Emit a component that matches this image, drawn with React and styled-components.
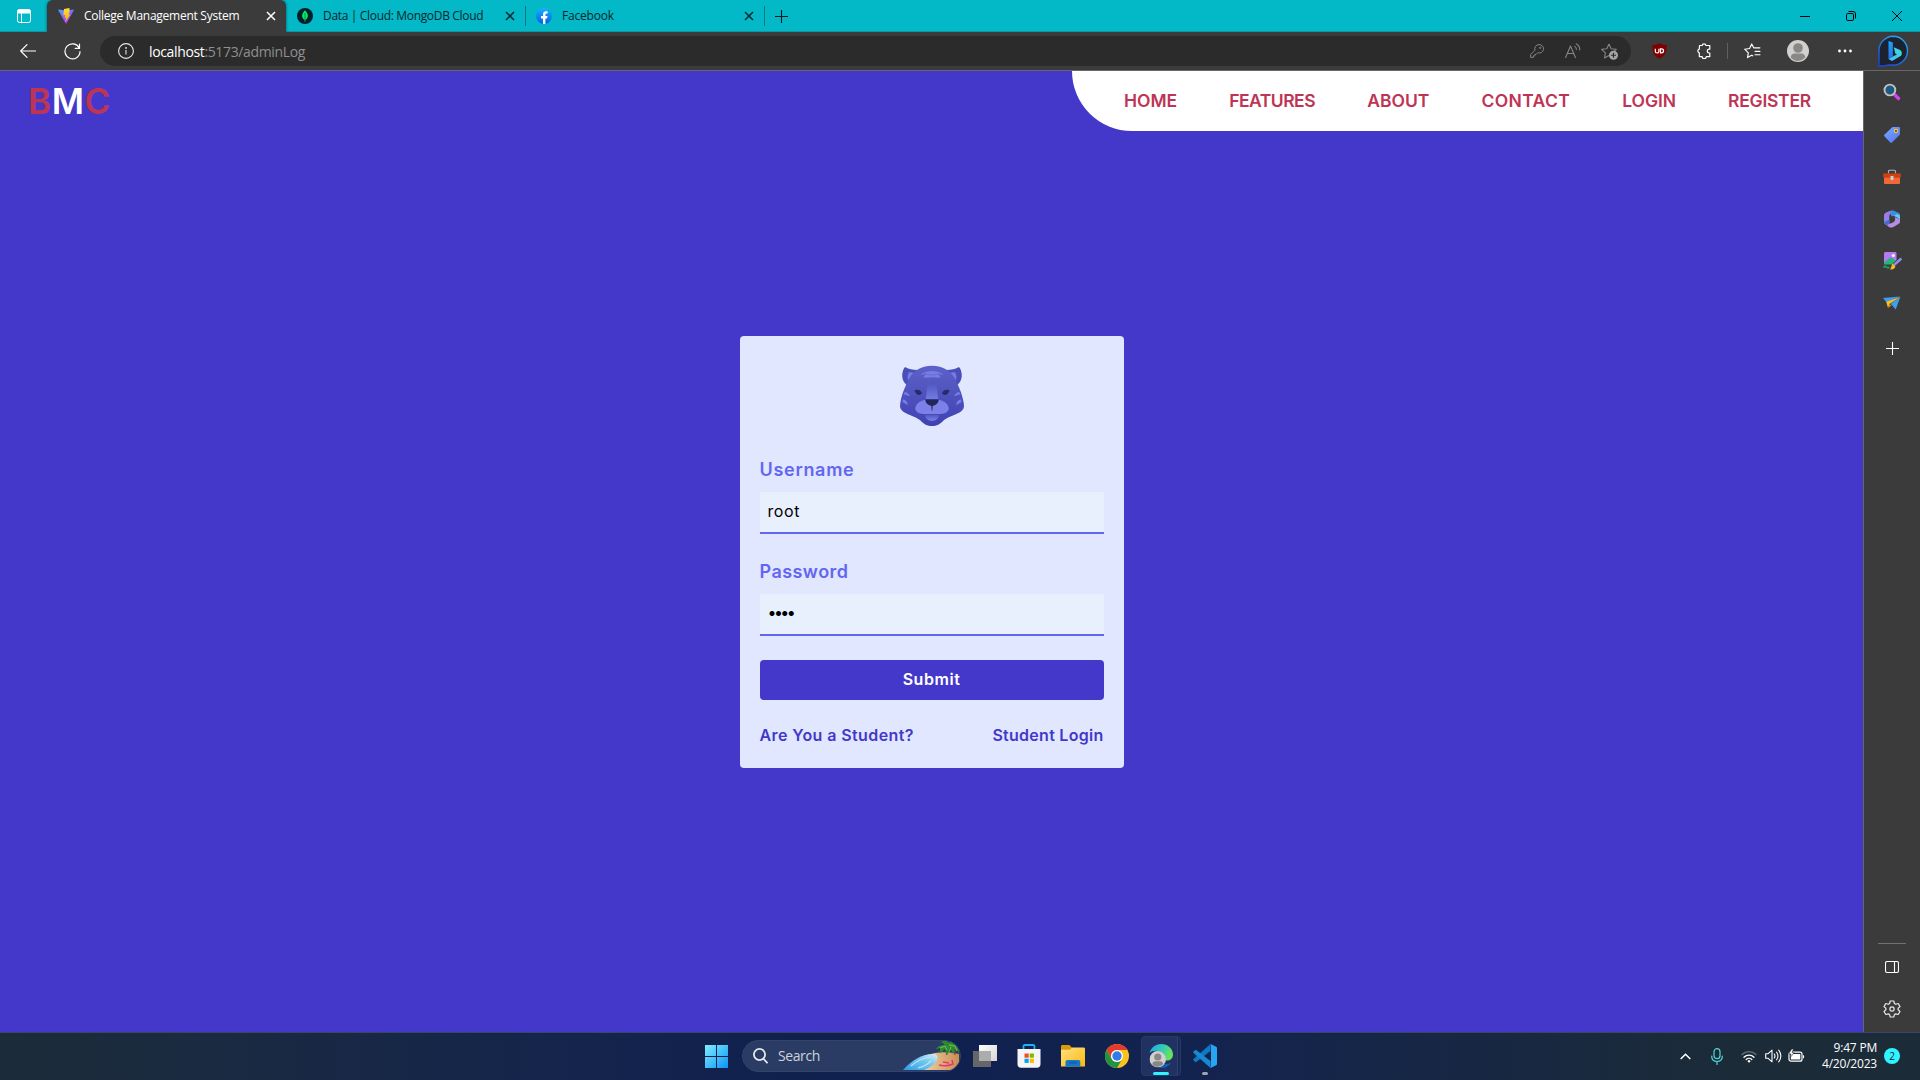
import React from "react";
import styled, { createGlobalStyle } from "styled-components";

const UI = `"Open Sans", "Noto Sans", sans-serif`;
const BRAND = `Inter, "Open Sans", sans-serif`;

const GlobalStyle = createGlobalStyle`
  *, *::before, *::after { box-sizing: border-box; }
  body { margin: 0; background: #4338ca; overflow: hidden; }
  svg { display: block; flex: none; }
  button, input { font: inherit; margin: 0; border: 0; padding: 0; }
`;

const Desktop = styled.div`
  width: 1920px;
  height: 1080px;
  display: flex;
  flex-direction: column;
  overflow: hidden;
  font-family: ${UI};
`;

/* ---------- browser chrome ---------- */

const TabStrip = styled.header`
  height: 32px;
  display: flex;
  background: #03b8c7;
  box-shadow: inset 0 -1px 0 #0b98a5;
`;

const TabActions = styled.div`
  width: 47px;
  padding-left: 17px;
  display: flex;
  align-items: center;
`;

const TabItem = styled.div`
  width: 239px;
  height: 32px;
  padding: 0 10px 0 11px;
  display: flex;
  align-items: center;
  gap: 10px;
  color: ${(p) => (p.$active ? "#ffffff" : "#06272b")};
  background: ${(p) => (p.$active ? "#3b3b3b" : "transparent")};
  border-radius: ${(p) => (p.$active ? "6px 6px 0 0" : "0")};
  box-shadow: ${(p) => (p.$active ? "0 0 3px rgba(0,40,50,.7)" : "none")};
  clip-path: ${(p) => (p.$active ? "inset(0 -4px 0 -4px)" : "none")};
`;

const TabLabel = styled.span`
  flex: 1;
  font-size: 12px;
  line-height: 16px;
  white-space: nowrap;
  letter-spacing: ${(p) => p.$ls || "0"};
`;

const TabDivider = styled.div`
  width: 1px;
  height: 20px;
  margin: 6px -1px 0 0;
  background: #13737c;
`;

const NewTab = styled.div`
  padding-left: 11px;
  display: flex;
  align-items: center;
`;

const WindowControls = styled.div`
  margin-left: auto;
  display: flex;
`;

const WindowControl = styled.div`
  width: 46px;
  display: flex;
  align-items: center;
  justify-content: center;
`;

const Toolbar = styled.div`
  height: 39px;
  padding: 4px 0;
  display: flex;
  align-items: center;
  background: #3b3b3b;
  border-bottom: 1px solid #676767;
`;

const Slot = styled.div`
  width: ${(p) => p.$w}px;
  flex: none;
  display: flex;
  align-items: center;
  justify-content: center;
`;

const AddressBar = styled.div`
  width: 1531px;
  height: 30px;
  margin-left: 12px;
  border-radius: 15px;
  padding: 0 13px 0 18px;
  background: #2b2b2b;
  display: flex;
  align-items: center;
`;

const Url = styled.span`
  flex: 1;
  padding: 1px 0 0 15px;
  font-size: 14px;
  line-height: 20px;
  letter-spacing: -0.36px;
  color: #8f8f8f;
  b { font-weight: 400; color: #fff; }
`;

const AddressIcons = styled.div`
  display: flex;
  align-items: center;
  gap: 20.5px;
`;

const ToolDivider = styled.div`
  width: 1px;
  height: 16px;
  background: #606060;
`;

const Main = styled.div`
  flex: 1;
  display: flex;
  min-height: 0;
`;

const SideBar = styled.aside`
  width: 57px;
  border-left: 1px solid #676767;
  background: #3b3b3b;
  display: flex;
  flex-direction: column;
  align-items: center;
  padding-bottom: 2px;
`;

const SideItem = styled.div`
  height: 42px;
  display: flex;
  align-items: center;
  margin-top: ${(p) => p.$mt || 0}px;
`;

const SideRule = styled.div`
  width: 28px;
  height: 1px;
  margin: auto 0 2px;
  background: #707070;
`;

/* ---------- web page ---------- */

const Page = styled.main`
  flex: 1;
  display: flex;
  flex-direction: column;
  background: #4338ca;
  font-family: ${BRAND};
`;

const PageHeader = styled.div`
  height: 60px;
  display: flex;
  justify-content: space-between;
`;

const Logo = styled.div`
  padding-left: 28px;
  font-size: 35px;
  line-height: 60px;
  font-weight: 600;
  letter-spacing: 0.6px;
  color: #be3455;
  span { color: #fff; }
`;

const Nav = styled.nav`
  width: 791px;
  padding: 0 52px 0 52px;
  border-bottom-left-radius: 60px;
  background: #fff;
  display: flex;
  justify-content: space-between;
`;

const NavLink = styled.a`
  font-size: 17.5px;
  line-height: 60px;
  font-weight: 600;
  color: #be3455;
  letter-spacing: ${(p) => p.$ls};
`;

const Center = styled.div`
  flex: 1;
  display: flex;
  flex-direction: column;
  align-items: center;
  padding: 205px 0 0 0;
`;

const Card = styled.form`
  width: 384px;
  height: 432px;
  padding: 29px 20px 0;
  border-radius: 4px;
  background: #e0e7ff;
  display: flex;
  flex-direction: column;
  align-items: stretch;
`;

const Mascot = styled.div`
  display: flex;
  justify-content: center;
  height: 91px;
`;

const Field = styled.label`
  height: 102px;
  display: flex;
  flex-direction: column;
`;

const FieldName = styled.span`
  height: 36px;
  font-size: 18px;
  line-height: 27px;
  font-weight: 600;
  letter-spacing: ${(p) => p.$ls};
  color: #6366f1;
`;

const Input = styled.input`
  && {
    width: 344px;
    height: 42px;
    padding: 0 8px ${(p) => p.$lift || 2}px;
    border-bottom: 2px solid #6366f1;
    outline: none;
    border-radius: 0;
    background: #e8f0fe;
    color: #000;
    font-family: ${BRAND};
    font-size: 16px;
    letter-spacing: ${(p) => p.$ls};
  }
`;

const Submit = styled.button`
  && {
    height: 40px;
    padding-bottom: 2px;
    border-radius: 4px;
    background: #4338ca;
    color: #fff;
    font-size: 16px;
    font-weight: 600;
    letter-spacing: 0.55px;
  }
`;

const CardLinks = styled.div`
  padding-top: 23px;
  display: flex;
  justify-content: space-between;
`;

const CardLink = styled.a`
  font-size: 16px;
  line-height: 24px;
  font-weight: 600;
  letter-spacing: ${(p) => p.$ls};
  color: #4338ca;
`;

/* ---------- taskbar ---------- */

const Taskbar = styled.footer`
  height: 48px;
  padding-bottom: 1px;
  border-top: 1px solid #3a4568;
  background: linear-gradient(90deg, #1c2b38 0%, #1a2a40 10%, #14244c 30%, #10204f 45%, #13234f 62%, #182840 80%, #1c2b38 90%);
  display: flex;
  align-items: center;
`;

const TaskApps = styled.div`
  padding-left: 705px;
  display: flex;
  align-items: center;
`;

const SearchPill = styled.div`
  width: 219px;
  height: 32px;
  flex: none;
  margin: 0 12px 0 14px;
  padding-left: 10px;
  border-radius: 16px;
  overflow: hidden;
  background: #2b3c64;
  border: 1px solid #33446b;
  display: flex;
  align-items: center;
`;

const SearchText = styled.span`
  flex: 1;
  padding: 0 0 1px 10px;
  font-size: 14px;
  letter-spacing: -0.4px;
  color: #cdd2dd;
`;

const TaskIcon = styled.div`
  width: 44px;
  height: 46px;
  display: flex;
  align-items: center;
  justify-content: center;
  flex: none;
`;

const ActiveGroup = styled.div`
  width: 40px;
  height: 40px;
  margin: 0 2px;
  border-radius: 4px;
  flex: none;
  background: linear-gradient(90deg, #213161 35px, #2f3f6c 35px, #2f3f6c 36px, #1a2a58 36px);
  border: 1px solid #293967;
  display: flex;
  flex-direction: column;
  align-items: center;
  padding-top: 7px;
`;

const RunningApp = styled.div`
  width: 44px;
  height: 40px;
  flex: none;
  display: flex;
  flex-direction: column;
  align-items: center;
  padding-top: 8px;
`;

const Indicator = styled.div`
  width: ${(p) => p.$w}px;
  height: 3px;
  margin-top: 4px;
  border-radius: 2px;
  background: ${(p) => p.$c};
`;

const Tray = styled.div`
  margin-left: auto;
  padding-right: 20px;
  display: flex;
  align-items: center;
`;

const TrayItem = styled.div`
  margin-right: ${(p) => p.$gap}px;
`;

const Clock = styled.div`
  font-size: 12px;
  line-height: 16px;
  text-align: right;
  color: #fff;
  letter-spacing: -0.2px;
`;

const Badge = styled.div`
  width: 16px;
  height: 16px;
  margin-left: 7px;
  border-radius: 50%;
  background: #2ff3ff;
  color: #12272f;
  font-size: 10px;
  line-height: 16px;
  text-align: center;
`;

/* ---------- icons ---------- */

const CloseTab = ({ color }) => (
  <svg width="10" height="10" viewBox="0 0 10 10" stroke={color} strokeWidth="1.5">
    <path d="M1 1l8 8M9 1l-8 8" />
  </svg>
);

const TabMenuIcon = () => (
  <svg width="14" height="14" viewBox="0 0 14 14" fill="none" stroke="#fff" strokeWidth="1">
    <rect x=".5" y=".5" width="13" height="13" rx="2" />
    <path d="M1 1h12v3H1z" fill="#fff" />
    <path d="M4.5 4v9.5" />
  </svg>
);

const ViteIcon = () => (
  <svg width="16" height="16" viewBox="0 0 16 16">
    <defs>
      <linearGradient id="vg" x1="0" y1="0" x2=".6" y2="1"><stop stopColor="#41a6ff" /><stop offset="1" stopColor="#bd34fe" /></linearGradient>
      <linearGradient id="vy" x1="0" y1="0" x2="0" y2="1"><stop stopColor="#ffdd35" /><stop offset="1" stopColor="#ffa800" /></linearGradient>
    </defs>
    <path d="M.3 2.3l7.3 13c.2.4.7.4.9 0l7.3-13c.2-.4-.1-.8-.5-.7L8.100 2.800.8 1.600c-.4-.1-.7.3-.5.7z" fill="url(#vg)" />
    <path d="M11.500.1L6 1.100l-.7 6.200 2-.4-.6 3.200 1.500-.3-.8 4.400 4.900-7.700-1.800.3 1-2.900z" fill="url(#vy)" />
  </svg>
);

const MongoIcon = () => (
  <svg width="16" height="16" viewBox="0 0 16 16">
    <circle cx="8" cy="8" r="8" fill="#001e2b" />
    <path d="M8 2.300c1.600 1.900 2.900 3.300 2.900 5.500 0 1.900-1.200 3.300-2.500 4.200L8.200 14h-.4l-.2-2C6.300 11.100 5.100 9.700 5.100 7.800 5.100 5.600 6.400 4.200 8 2.300z" fill="#00ed64" />
    <path d="M8 5v7.500" stroke="#00684a" strokeWidth=".7" />
  </svg>
);

const FacebookIcon = () => (
  <svg width="16" height="16" viewBox="0 0 16 16">
    <defs><linearGradient id="fb" x1="0" y1="0" x2="0" y2="1"><stop stopColor="#19afff" /><stop offset="1" stopColor="#0062e0" /></linearGradient></defs>
    <circle cx="8" cy="8" r="8" fill="url(#fb)" />
    <path d="M7 16v-5.600H5V8.100h2V6.400c0-2 1.200-3.100 3-3.100.8 0 1.600.1 1.600.1v2h-1c-.9 0-1.200.6-1.200 1.200v1.500h2.100l-.4 2.300H9.400V16z" fill="#fff" />
  </svg>
);

const PlusIcon = ({ size, color }) => (
  <svg width={size} height={size} viewBox="0 0 13 13" stroke={color} strokeWidth="1.100">
    <path d="M6.500 0v13M0 6.500h13" />
  </svg>
);

const BackIcon = () => (
  <svg width="16" height="14" viewBox="0 0 16 14" fill="none" stroke="#fff" strokeWidth="1.200" strokeLinecap="round" strokeLinejoin="round">
    <path d="M15.500 7H.7M7 .7L.7 7 7 13.300" />
  </svg>
);

const ReloadIcon = () => (
  <svg width="17" height="17" viewBox="0 0 17 17" fill="none" stroke="#fff" strokeWidth="1.200" strokeLinecap="round" strokeLinejoin="round">
    <path d="M15.300 5.200A7.500 7.500 0 1 0 16 8.500M15.500 1.200v4.200h-4.300" />
  </svg>
);

const InfoIcon = () => (
  <svg width="16" height="16" viewBox="0 0 16 16" fill="none" stroke="#e8e8e8" strokeWidth="1.100">
    <circle cx="8" cy="8" r="7.400" />
    <path d="M8 7v4.500" />
    <circle cx="8" cy="4.900" r=".4" />
  </svg>
);

const KeyIcon = () => (
  <svg width="14" height="14" viewBox="0 0 14 14" fill="none" stroke="#858585" strokeWidth="1" strokeLinejoin="round">
    <path d="M9 .6a4.200 4.200 0 0 0-4 5.600L.6 10.600v2.800h2.700v-1.500h1.500v-1.500h1.300L7.800 8.700A4.200 4.200 0 1 0 9 .6z" />
    <circle cx="10.200" cy="3.800" r=".7" />
  </svg>
);

const ReadIcon = () => (
  <svg width="16" height="16" viewBox="0 0 16 16" fill="none" stroke="#858585" strokeWidth="1.100" strokeLinecap="round" strokeLinejoin="round">
    <path d="M.6 14.500L5.500 3l4.900 11.500M2.200 10.500h6.600M9.700 3.400c1.100.7 1.700 1.700 1.700 3M11.200.8c2.400 1.300 3.700 3.400 3.500 6.200" />
  </svg>
);

const StarAddIcon = () => (
  <svg width="17" height="17" viewBox="0 0 17 17" fill="none" stroke="#858585" strokeLinejoin="round">
    <path d="M8 1l2.100 4.700 5.200.6-3.900 3.400M8 12.600L3.500 15l.9-5.200L.6 6.300l5.200-.6L8 1" strokeWidth="1.100" />
    <circle cx="12.500" cy="12.300" r="4.500" fill="#a5a5a5" stroke="none" />
    <path d="M12.500 9.800v5M10 12.300h5" stroke="#2b2b2b" strokeWidth="1.100" />
  </svg>
);

const ShieldIcon = () => (
  <svg width="15" height="16" viewBox="0 0 15 16">
    <path d="M7.500 0C5.300 1.400 3 2 .3 2.100c0 6.500 1 10.600 7.200 13.700 6.200-3.100 7.200-7.200 7.200-13.700C12 2 9.700 1.400 7.500 0z" fill="#800000" />
    <path d="M3.300 5.700v2.500c0 2.400 3.600 2.400 3.600 0V5.700M6.900 7.400h.6M8.500 5.800h1a2 2 0 0 1 0 4.100h-1z" fill="none" stroke="#fff" strokeWidth="1.200" />
  </svg>
);

const PuzzleIcon = () => (
  <svg width="16" height="16" viewBox="0 0 16 16" fill="none" stroke="#fff" strokeWidth="1.200" strokeLinejoin="round">
    <path d="M3.500 2.500h2.600a2 2 0 0 1 3.900 0h3.800v3.700h-.6a1.900 1.900 0 0 0 0 3.800h.6v3.600h-3.500a2.100 2.100 0 0 1-4.200 0H3.300V9.900a1.900 1.900 0 0 1 0-3.700z" />
  </svg>
);

const FavListIcon = () => (
  <svg width="17" height="16" viewBox="0 0 17 16" fill="none" stroke="#fff" strokeWidth="1.150" strokeLinejoin="round" strokeLinecap="round">
    <path d="M9.800 4.800H15.900M11 8.300h5M11 11.700h5M8.700 12.800l-1-.5-4.200 2.300.8-4.800L.7 6.200l4.900-.7L7.700.9l2 3.900" />
  </svg>
);

const Avatar = ({ size }) => (
  <svg width={size} height={size} viewBox="0 0 22 22">
    <circle cx="11" cy="11" r="11" fill="#d2d0ce" />
    <circle cx="11" cy="8" r="4.800" fill="#8a8886" />
    <path d="M3.800 17.500c0-2.400 1.600-4 4-4h6.400c2.400 0 4 1.600 4 4A10.500 10.500 0 0 1 11 21c-3 0-5.500-1.200-7.200-3.500z" fill="#8a8886" />
  </svg>
);

const DotsIcon = () => (
  <svg width="14" height="4" viewBox="0 0 14 4" fill="#fff">
    <circle cx="1.500" cy="2" r="1.400" /><circle cx="7" cy="2" r="1.400" /><circle cx="12.500" cy="2" r="1.400" />
  </svg>
);

const BingIcon = () => (
  <svg width="32" height="32" viewBox="0 0 32 32">
    <defs>
      <linearGradient id="bo" x1=".8" y1="0" x2=".2" y2="1"><stop stopColor="#2ba8f0" /><stop offset="1" stopColor="#1c46d8" /></linearGradient>
      <linearGradient id="bb" x1="0" y1="0" x2="0" y2="1"><stop stopColor="#18a8f5" /><stop offset="1" stopColor="#2a6df0" /></linearGradient>
      <linearGradient id="bc" x1="1" y1="0" x2="0" y2="1"><stop stopColor="#35e3cf" /><stop offset="1" stopColor="#4bb4ff" /></linearGradient>
    </defs>
    <path d="M16 1.200a14.500 14.500 0 1 1 0 29c-3 0-5-.7-6.500.2-2 .8-5 .6-8 .4 1-2 .6-4 .5-6.500V15.500A14.500 14.500 0 0 1 16 1.200z" fill="#1d2230" stroke="url(#bo)" strokeWidth="1.400" />
    <path d="M11.500 6l4.300 1.600V21l-4.300 3.200z" fill="url(#bb)" />
    <path d="M16.800 12.300l6.200 2.800c1.400.7 1.800 2 1.800 3.300 0 1.500-.8 2.500-2 3.200L15 26l-3.500-1.900 4.300-2.700 4.200-2-1.700-1z" fill="url(#bc)" />
  </svg>
);

const SideSearch = () => (
  <svg width="18" height="18" viewBox="0 0 18 18">
    <path d="M11.500 11.500l4 4" stroke="#d940f5" strokeWidth="3.200" strokeLinecap="round" />
    <circle cx="6.900" cy="7" r="5.400" fill="#1d5a7c" stroke="#bfc3c4" strokeWidth="1.900" />
  </svg>
);

const SideTag = () => (
  <svg width="18" height="18" viewBox="0 0 18 18">
    <defs><linearGradient id="tg" x1="0" y1="0" x2="1" y2="1"><stop stopColor="#73b0ff" /><stop offset="1" stopColor="#5b6cf5" /></linearGradient></defs>
    <path d="M9.500 1h6c1 0 1.500.5 1.500 1.500v6L9 16.500c-.6.500-1.100.5-1.700 0L1.400 10.300c-.5-.6-.5-1 0-1.600z" fill="url(#tg)" />
    <circle cx="13" cy="5" r="1.700" fill="#4a5078" stroke="#f5c518" strokeWidth="1.200" />
  </svg>
);

const SideTools = () => (
  <svg width="18" height="18" viewBox="0 0 18 18">
    <path d="M5.500 5.500V3.300c0-.8.4-1.100 1.100-1.100h4.800c.7 0 1.100.3 1.100 1.100v2.200" fill="none" stroke="#aeb0b1" strokeWidth="1.100" />
    <path d="M1 9h16v6c0 .7-.3 1-1 1H2c-.7 0-1-.3-1-1z" fill="#f0683a" />
    <path d="M.2 5.500h17.600v3c0 .7-.3 1.200-1 1.200H1.200c-.7 0-1-.5-1-1.200z" fill="#d0400f" />
    <path d="M7.500 8h3v2.800a1.500 1.500 0 0 1-3 0z" fill="#c8cdd0" />
  </svg>
);

const SideOffice = () => (
  <svg width="18" height="18" viewBox="0 0 18 18">
    <path d="M7.200.8C4 2 1.400 3.200 1 4.800v7.500c0 1.300 1 2 2.200 2.300 2.200.5 3.100-.6 3.100-2V6.200C6.300 3.800 9 3 10.500 1.500 9.500.600 8.200.500 7.200.800z" fill="#9a7bea" />
    <path d="M8.300.7c-1 .6-1.300 1.500-1 3l1.200 2.600 2.800-.4L17 8.400V5c0-1-.5-1.500-1.300-2L10.300.6c-.7-.3-1.400-.3-2 .1z" fill="#3e8fe0" />
    <path d="M11 5.800l6 3.400V5.500L14 4z" fill="#55d0f5" />
    <path d="M1.200 13.300L6 16.900c1.700 1 3 .8 4.500 0l5-3c1-.6 1.500-1.400 1.500-2.500V9.200l-5.500-2.100c1.300 2.200.8 4.200-1.500 5.400-2.700 1.500-5.500 2-8.800.8z" fill="#b68be6" />
    <path d="M1 12l5-2 .6 3.200L4.200 15.500 1.500 13.800z" fill="#426fcb" />
  </svg>
);

const SideImage = () => (
  <svg width="19" height="18" viewBox="0 0 19 18">
    <path d="M2.500 0h9.500c1 0 1.500.5 1.500 1.500V12H1V1.500C1 .5 1.500 0 2.500 0z" fill="#b57af2" />
    <path d="M1 10.500l6-4.800c.6-.4 1-.4 1.600 0L13.500 9l-3 3.500H1z" fill="#27b573" />
    <path d="M.3 15.500c1.500-1.600 3-1 3.200-.5s1.700 1 3 .2" fill="none" stroke="#1f9f6d" strokeWidth="1.800" />
    <circle cx="10.300" cy="3.400" r="1.500" fill="#fff" />
    <path d="M11.500 12.500l6-5.300" stroke="#3b3b3b" strokeWidth="4" strokeLinecap="round" />
    <path d="M11.500 12.500l6-5.300" stroke="#8f8bf0" strokeWidth="2.600" strokeLinecap="round" />
    <path d="M9.500 11.500l3 3c-1 2.500-3 3.300-5.500 2.700 1.500-1 1-3.500 2.500-5.700z" fill="#fbb91a" />
  </svg>
);

const SidePlane = () => (
  <svg width="18" height="18" viewBox="0 0 18 18">
    <path d="M0 4L17.300 2.500 3.500 8.300z" fill="#3f9df2" />
    <path d="M17.300 3L7.800 9.800l4.900 5.700z" fill="#3ca0f5" />
    <path d="M3.200 7.800L17.300 3 6.500 10.100 5 14z" fill="#f9c31d" />
    <path d="M5 14l1.500-3.900 2 1.500z" fill="#d88a10" />
  </svg>
);

const PanelIcon = () => (
  <svg width="14" height="12" viewBox="0 0 14 12" fill="none" stroke="#fff" strokeWidth="1.100">
    <rect x=".5" y=".5" width="13" height="11" rx="1.800" /><path d="M9.500.5v11" />
  </svg>
);

const GearIcon = () => (
  <svg width="18" height="18" viewBox="0 0 18 18" fill="none" stroke="#e8e8e8" strokeWidth="1.200" strokeLinejoin="round">
    <path d="M7.200 1h3.600l.6 2.500 1.300.8 2.500-.8L17 6.600 15.100 8.300v1.500l1.900 1.700-1.800 3-2.500-.7-1.300.8-.6 2.400H7.200l-.6-2.400-1.300-.8-2.500.7-1.800-3 1.900-1.700V8.300L1 6.600l1.800-3.100 2.500.8 1.300-.8z" />
    <circle cx="9" cy="9" r="2.100" />
  </svg>
);

const PantherIcon = () => (
  <svg width="64" height="62" viewBox="60 45 192 186">
    <defs>
      <linearGradient id="pf" x1="0" y1="0" x2="0" y2="1"><stop stopColor="#5c62c8" /><stop offset="1" stopColor="#3f41b2" /></linearGradient>
      <linearGradient id="pn" x1="0" y1="0" x2="0" y2="1"><stop stopColor="#5056bf" /><stop offset="1" stopColor="#757be6" /></linearGradient>
      <linearGradient id="pc" x1="0" y1="0" x2="0" y2="1"><stop stopColor="#5157c2" /><stop offset="1" stopColor="#7a80e9" /></linearGradient>
    </defs>
    <path d="M112 60C98 60 86 58 77 52q-3-1-5 3c-9 17-7 38 8 50zM200 60c14 0 26-2 35-8q3-1 5 3c9 17 7 38-8 50z" fill="#494eb8" />
    <path d="M104 69c-7-1-12-3-17-2-6 8-5 20-1 29zM208 69c7-1 12-3 17-2 6 8 5 20 1 29z" fill="#767ce5" />
    <path d="M156 47c-34 0-58 16-70 41-9 20-20 40-25 70-2 14-1 20 9 27 12 8 38 15 50 25 9 10 18 18 36 18s27-8 36-18c12-10 38-17 50-25 10-7 11-13 9-27-5-30-16-50-25-70-12-25-36-41-70-41z" fill="url(#pf)" />
    <path d="M122 74c8-7 18-11 34-11s26 4 34 11l-17-2q9 6 7 10c-5 2-12 0-24 0s-19 2-24 0q-2-4 7-10z" fill="#777de4" />
    <path d="M131 70q10 5 25 5t25-5" fill="none" stroke="#5e64cc" strokeWidth="2" />
    <path d="M143 101q13-7 26 0l6 48h-38z" fill="url(#pn)" />
    <path d="M103 121c10-4 20-1 23 9-5 8-17 6-20-4zM209 121c-10-4-20-1-23 9 5 8 17 6 20-4z" fill="#282b65" />
    <path d="M138 149c-16 2-32 12-32 26 0 12 12 17 24 17h52c12 0 24-5 24-17 0-14-16-24-32-26z" fill="#7b81e9" />
    <path d="M135 194h42c-1 24-41 24-42 0z" fill="url(#pc)" />
    <path d="M136 148h40c1 10-8 18-18 20l-1 14h-2l-1-14c-10-2-19-10-18-20z" fill="#23265a" />
    <path d="M74 126q13 2 16 13-9-3-19-6zM69 148q13 3 15 17-10-4-17-10zM238 126q-13 2-16 13 9-3 19-6zM243 148q-13 3-15 17 10-4 17-10z" fill="#777de4" />
  </svg>
);

const WindowsIcon = () => (
  <svg width="23" height="23" viewBox="0 0 23 23">
    <defs><linearGradient id="wi" gradientUnits="userSpaceOnUse" x1="0" y1="0" x2="23" y2="23"><stop stopColor="#7fedff" /><stop offset="1" stopColor="#0a94f5" /></linearGradient></defs>
    <path d="M0 0h11v11H0zM12 0h11v11H12zM0 12h11v11H0zM12 12h11v11H12z" fill="url(#wi)" />
  </svg>
);

const SearchIcon = () => (
  <svg width="15" height="16" viewBox="0 0 15 16" fill="none" stroke="#e3e6ec" strokeWidth="1.800" strokeLinecap="round">
    <circle cx="6.500" cy="6.500" r="5.600" /><path d="M10.700 11l3.300 3.700" />
  </svg>
);

const BeachIcon = () => (
  <svg width="58" height="30" viewBox="0 0 58 30">
    <defs>
      <linearGradient id="sea" x1="0" y1="1" x2="1" y2="0"><stop stopColor="#2b9be6" /><stop offset=".6" stopColor="#76c8ee" /><stop offset="1" stopColor="#d6eff2" /></linearGradient>
      <linearGradient id="snd" x1="0" y1="0" x2="1" y2="0"><stop stopColor="#f6d7ae" /><stop offset="1" stopColor="#c98d55" /></linearGradient>
    </defs>
    <path d="M26 14c6-3 20-4 31-1v16H18z" fill="url(#snd)" />
    <path d="M1 29C9 20 19 13 31 13c6 0 6 6 1 10-4 3-5 4-10 6z" fill="url(#sea)" />
    <path d="M9 25q9-8 20-9M16 27q8-2 13-7" stroke="#b9e6f6" strokeWidth="1.200" fill="none" />
    <path d="M37 24q7 2 14-1l-1-4M41 21l6 1" stroke="#e8376a" strokeWidth="1.500" fill="none" />
    <path d="M45 14c-1-4-1-5-2-8M53 14c-1-4 0-6 1-9" stroke="#7a4c1d" strokeWidth="1.300" fill="none" />
    <path d="M34 9c1-4 5-5 9-5-2-3-4-3-5-2 3-3 7-3 9 0 3-3 7-2 9 2l1 8c-2-3-3-4-5-4 1 2 0 4-1 5-1-3-2-4-4-5 0 3-1 5-3 6 0-4 0-5-2-6-1 3-3 4-5 4 1-2 1-4 1-5-2 0-3 1-4 2z" fill="#2c8b32" />
    <path d="M38 7l5-2 2 4M47 4l6 1 2 5M49 6l-2 5" stroke="#6fc843" strokeWidth="1" fill="none" />
  </svg>
);

const TaskViewIcon = () => (
  <svg width="24" height="22" viewBox="0 0 24 22">
    <defs><linearGradient id="tv" x1="0" y1="0" x2="1" y2="1"><stop stopColor="#fff" /><stop offset="1" stopColor="#d5d5d5" /></linearGradient></defs>
    <path d="M0 6h18v16H0z" fill="#646668" />
    <path d="M6 0h18v16H6z" fill="url(#tv)" />
    <path d="M6 6h12v10H6z" fill="#aaacae" />
  </svg>
);

const StoreIcon = () => (
  <svg width="24" height="24" viewBox="0 0 24 24">
    <path d="M6.500 5.500V2.500c0-1 .5-1.500 1.500-1.500h8c1 0 1.500.5 1.500 1.500v3" fill="none" stroke="#20b4ee" strokeWidth="1.800" />
    <path d="M.5 5h23v15c0 2.500-1.300 3.700-3.500 3.700H4c-2.200 0-3.500-1.200-3.500-3.700z" fill="#f5f5f6" />
    <path d="M7.500 9.500h4.200v4.200H7.500z" fill="#f25022" /><path d="M12.700 9.500h4.200v4.200h-4.200z" fill="#7fba00" />
    <path d="M7.500 14.700h4.200v4.200H7.500z" fill="#00a4ef" /><path d="M12.700 14.700h4.200v4.200h-4.200z" fill="#ffb900" />
  </svg>
);

const FolderIcon = () => (
  <svg width="24" height="22" viewBox="0 0 24 22">
    <defs><linearGradient id="fo" x1="0" y1="0" x2="1" y2="1"><stop stopColor="#ffe083" /><stop offset="1" stopColor="#fbb90e" /></linearGradient></defs>
    <path d="M0 1.500C0 .500.500 0 1.500 0h6c1 0 1.300.3 1.900 1L11 2.800V6H0z" fill="#dc9a09" />
    <path d="M0 4.800h7.500c1 0 1.700-.2 2.300-.9L11 2.500h11.500c1 0 1.500.5 1.500 1.500v17.500H0z" fill="url(#fo)" />
    <path d="M4.500 21.500V17c0-1.300.8-2 2-2h10.800c1.300 0 2 .7 2 2v4.500z" fill="#1876c9" />
    <path d="M8 17.800h8" stroke="#0e5aa5" strokeWidth="1.300" />
  </svg>
);

const ChromeIcon = () => (
  <svg width="24" height="24" viewBox="0 0 24 24">
    <circle cx="12" cy="12" r="12" fill="#fcc31e" />
    <path d="M12 0a12 12 0 0 1 10.400 6H12a6 6 0 0 0-5.200 9L1.600 6A12 12 0 0 1 12 0z" fill="#e33b2e" />
    <path d="M1.600 6l5.200 9a6 6 0 0 0 10.400 0L12 24A12 12 0 0 1 1.600 6z" fill="#229342" />
    <circle cx="12" cy="12" r="6" fill="#fff" /><circle cx="12" cy="12" r="4.700" fill="#2f7bea" />
  </svg>
);

const EdgeIcon = () => (
  <svg width="24" height="24" viewBox="0 0 24 24">
    <defs>
      <linearGradient id="eg" x1="0" y1="0" x2="1" y2=".3"><stop stopColor="#1fa8e0" /><stop offset=".55" stopColor="#32c8c0" /><stop offset="1" stopColor="#67e35a" /></linearGradient>
    </defs>
    <path d="M.5 9C2 3.500 6.500 0 12 0c7 0 12 5 12 10.500 0 4-3 6-6 6-2.500 0-4-.9-3.500-2 1.500-2 1-5-2-6.500C8 6 3 6.500.5 9z" fill="url(#eg)" />
    <path d="M10 12c-1 6 4 10 12 7-3 4.500-8 5.700-12 4.500z" fill="#1160b5" />
    <g transform="translate(0.500 7)"><Avatar size={16.500} /></g>
  </svg>
);

const CodeIcon = () => (
  <svg width="24" height="24" viewBox="0 0 24 24">
    <path d="M17.500 0v7L3.200 17.900c-.4.300-.8.300-1.100 0L.6 16.500c-.5-.4-.5-1 0-1.400z" fill="#0b79c6" />
    <path d="M17.500 24v-7L3.200 6.100c-.4-.3-.8-.3-1.100 0L.6 7.500c-.5.400-.5 1 0 1.400z" fill="#1689d5" />
    <path d="M17.500 0l5.700 2.700c.5.200.8.700.8 1.300v16c0 .6-.3 1.100-.8 1.300L17.500 24c-.4 0-.9-.2-1-.4.800.3 1.500-.3 1.500-1.100V1.500C18 .700 17.300.100 16.500.400c.2-.3.600-.4 1-.4z" fill="#26a5f2" />
  </svg>
);

const MicIcon = () => (
  <svg width="12" height="17" viewBox="0 0 12 17" fill="none" stroke="#54d5db" strokeWidth="1.200" strokeLinecap="round">
    <rect x="3" y=".7" width="6" height="10" rx="3" /><path d="M.7 8c0 3.500 2 5.500 5.300 5.500s5.300-2 5.300-5.500M6 13.500v3" />
  </svg>
);

const WifiIcon = () => (
  <svg width="16" height="13" viewBox="0 0 16 13" fill="none" stroke="#fff" strokeWidth="1.300" strokeLinecap="round">
    <path d="M1 4.500a10 10 0 0 1 14 0" stroke="#66717b" /><path d="M3 7.200a7 7 0 0 1 10 0M5.200 9.500a4 4 0 0 1 5.600 0" />
    <circle cx="8" cy="11.300" r="1.200" fill="#fff" stroke="none" />
  </svg>
);

const SpeakerIcon = () => (
  <svg width="17" height="14" viewBox="0 0 17 14" fill="none" stroke="#fff" strokeWidth="1.100" strokeLinecap="round" strokeLinejoin="round">
    <path d="M.7 4.700h2.500L7 1.200v11.600L3.200 9.300H.7zM9.300 5q1.300 2 0 4M11.600 3.200q2.700 3.800 0 7.600M13.700 1.200q4.300 5.800 0 11.600" />
  </svg>
);

const BatteryIcon = () => (
  <svg width="17" height="14" viewBox="0 0 17 14">
    <rect x="1" y="3.200" width="13" height="9" rx="2" fill="none" stroke="#fff" strokeWidth="1.200" />
    <path d="M2.800 5h9.500v5.500H2.800z" fill="#fff" /><path d="M15 6c1.500 0 1.500 3.500 0 3.500z" fill="#fff" />
    <path d="M3.600 0L.7 5H3l-.8 3.500L6.200 3.700H4L5.500 0z" fill="#fff" stroke="#1c2b38" strokeWidth=".6" />
  </svg>
);

const Tab = ({ active, icon, label, ls }) => (
  <TabItem $active={active}>
    {icon}
    <TabLabel $ls={ls}>{label}</TabLabel>
    <CloseTab color={active ? "#fff" : "#06272b"} />
  </TabItem>
);

const NAV = [
  ["HOME", "-0.05px"],
  ["FEATURES", "-0.5px"],
  ["ABOUT", "0px"],
  ["CONTACT", "0.35px"],
  ["LOGIN", "-0.1px"],
  ["REGISTER", "-0.25px"],
];

export default function App() {
  return (
    <Desktop>
      <GlobalStyle />
      <TabStrip>
        <TabActions><TabMenuIcon /></TabActions>
        <Tab active icon={<ViteIcon />} label="College Management System" ls="-0.26px" />
        <Tab icon={<MongoIcon />} label="Data | Cloud: MongoDB Cloud" ls="-0.33px" />
        <TabDivider />
        <Tab icon={<FacebookIcon />} label="Facebook" ls="-0.2px" />
        <TabDivider />
        <NewTab><PlusIcon size={13} color="#031a1d" /></NewTab>
        <WindowControls>
          <WindowControl>
            <svg width="10" height="10" viewBox="0 0 10 10" stroke="#000"><path d="M0 5.500h10" /></svg>
          </WindowControl>
          <WindowControl>
            <svg width="10" height="10" viewBox="0 0 10 10" fill="none" stroke="#000">
              <rect x=".5" y="2.500" width="7" height="7" rx="1.300" /><path d="M2.500.5H7A2.500 2.500 0 0 1 9.500 3v4.500" />
            </svg>
          </WindowControl>
          <WindowControl>
            <svg width="10" height="10" viewBox="0 0 10 10" stroke="#000"><path d="M0 0l10 10M10 0L0 10" /></svg>
          </WindowControl>
        </WindowControls>
      </TabStrip>

      <Toolbar>
        <Slot $w={56}><BackIcon /></Slot>
        <Slot $w={32}><ReloadIcon /></Slot>
        <AddressBar>
          <InfoIcon />
          <Url><b>localhost</b>:5173/adminLog</Url>
          <AddressIcons><KeyIcon /><ReadIcon /><StarAddIcon /></AddressIcons>
        </AddressBar>
        <Slot $w={57}><ShieldIcon /></Slot>
        <Slot $w={32}><PuzzleIcon /></Slot>
        <Slot $w={7} />
        <ToolDivider />
        <Slot $w={48}><FavListIcon /></Slot>
        <Slot $w={44}><Avatar size={22} /></Slot>
        <Slot $w={49}><DotsIcon /></Slot>
        <Slot $w={47}><BingIcon /></Slot>
      </Toolbar>

      <Main>
        <Page>
          <PageHeader>
            <Logo>B<span>M</span>C</Logo>
            <Nav>
              {NAV.map(([name, ls]) => <NavLink key={name} $ls={ls}>{name}</NavLink>)}
            </Nav>
          </PageHeader>
          <Center>
            <Card onSubmit={(e) => e.preventDefault()}>
              <Mascot><PantherIcon /></Mascot>
              <Field>
                <FieldName $ls="0.7px">Username</FieldName>
                <Input type="text" defaultValue="root" $ls="0.6px" />
              </Field>
              <Field>
                <FieldName $ls="0.45px">Password</FieldName>
                <Input type="password" defaultValue="root" $ls="-2.6px" $lift={4} />
              </Field>
              <Submit type="submit">Submit</Submit>
              <CardLinks>
                <CardLink $ls="0.4px">Are You a Student?</CardLink>
                <CardLink $ls="0.27px">Student Login</CardLink>
              </CardLinks>
            </Card>
          </Center>
        </Page>
        <SideBar>
          <SideItem><SideSearch /></SideItem>
          <SideItem $mt={1}><SideTag /></SideItem>
          <SideItem><SideTools /></SideItem>
          <SideItem><SideOffice /></SideItem>
          <SideItem><SideImage /></SideItem>
          <SideItem><SidePlane /></SideItem>
          <SideItem $mt={3}><PlusIcon size={13} color="#fff" /></SideItem>
          <SideRule />
          <SideItem><PanelIcon /></SideItem>
          <SideItem><GearIcon /></SideItem>
        </SideBar>
      </Main>

      <Taskbar>
        <TaskApps>
          <WindowsIcon />
          <SearchPill>
            <SearchIcon />
            <SearchText>Search</SearchText>
            <BeachIcon />
          </SearchPill>
          <Slot $w={24}><TaskViewIcon /></Slot>
          <Slot $w={10} />
          <TaskIcon><StoreIcon /></TaskIcon>
          <TaskIcon><FolderIcon /></TaskIcon>
          <TaskIcon><ChromeIcon /></TaskIcon>
          <ActiveGroup><EdgeIcon /><Indicator $w={16} $c="#2ff3ff" /></ActiveGroup>
          <RunningApp><CodeIcon /><Indicator $w={6} $c="#9da3b5" /></RunningApp>
        </TaskApps>
        <Tray>
          <TrayItem $gap={20}>
            <svg width="11" height="7" viewBox="0 0 11 7" fill="none" stroke="#fff" strokeWidth="1.500"><path d="M.7 6l4.800-4.800L10.300 6" /></svg>
          </TrayItem>
          <TrayItem $gap={18}><MicIcon /></TrayItem>
          <TrayItem $gap={8}><WifiIcon /></TrayItem>
          <TrayItem $gap={6}><SpeakerIcon /></TrayItem>
          <TrayItem $gap={17}><BatteryIcon /></TrayItem>
          <Clock>9:47 PM<br />4/20/2023</Clock>
          <Badge>2</Badge>
        </Tray>
      </Taskbar>
    </Desktop>
  );
}
